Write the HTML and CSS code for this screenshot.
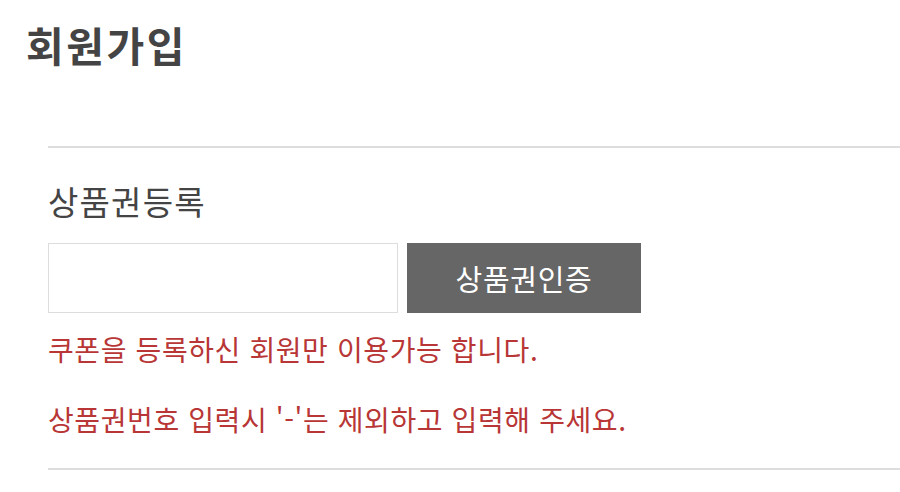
FILE: index.html
```html
<!DOCTYPE html>
<html lang="ko">
<head>
<meta charset="utf-8">
<link rel="stylesheet" href="styles.css">
</head>
<body>
<div class="page">
  <h1 class="title">회원가입</h1>
  <section class="coupon">
    <h2 class="coupon-title">상품권등록</h2>
    <div class="coupon-form">
      <input class="coupon-input" type="text">
      <button class="coupon-btn" type="button">상품권인증</button>
    </div>
    <p class="notice">쿠폰을 등록하신 회원만 이용가능 합니다.</p>
    <p class="notice">상품권번호 입력시 '-'는 제외하고 입력해 주세요.</p>
  </section>
</div>
</body>
</html>
```
FILE: styles.css
```css
html, body {
  margin: 0;
  padding: 0;
  background: #fff;
}
body {
  font-family: "Noto Sans CJK KR", "Noto Sans", sans-serif;
  color: #444;
  width: 900px;
  height: 492px;
  overflow: hidden;
}
.page {
  padding: 17px 0 0 26px;
}
.title {
  margin: 0;
  font-size: 41px;
  font-weight: 700;
  line-height: 54px;
  letter-spacing: 2.5px;
  color: #444;
}
.coupon {
  margin: 75px 0 0 22px;
  border-top: 2px solid #ddd;
  border-bottom: 2px solid #ddd;
  padding: 30px 0 31px 0;
}
.coupon-title {
  margin: 0;
  font-size: 33px;
  font-weight: 400;
  line-height: 46px;
  letter-spacing: 1.2px;
  color: #444;
}
.coupon-form {
  display: flex;
  gap: 9px;
  margin-top: 19px;
  margin-bottom: 18px;
}
.coupon-input {
  width: 350px;
  height: 70px;
  box-sizing: border-box;
  border: 1px solid #ddd;
  margin: 0;
  padding: 0 10px;
  background: #fff;
  outline: none;
}
.coupon-btn {
  width: 234px;
  height: 70px;
  border: 0;
  margin: 0;
  background: #666;
  color: #fff;
  font-family: "Noto Sans CJK KR", "Noto Sans", sans-serif;
  font-size: 29px;
  font-weight: 400;
  letter-spacing: 0.7px;
}
.notice {
  margin: 0;
  font-size: 28px;
  line-height: 36px;
  letter-spacing: 0.6px;
  color: #b83636;
}
.notice + .notice {
  margin-top: 34px;
}
```
